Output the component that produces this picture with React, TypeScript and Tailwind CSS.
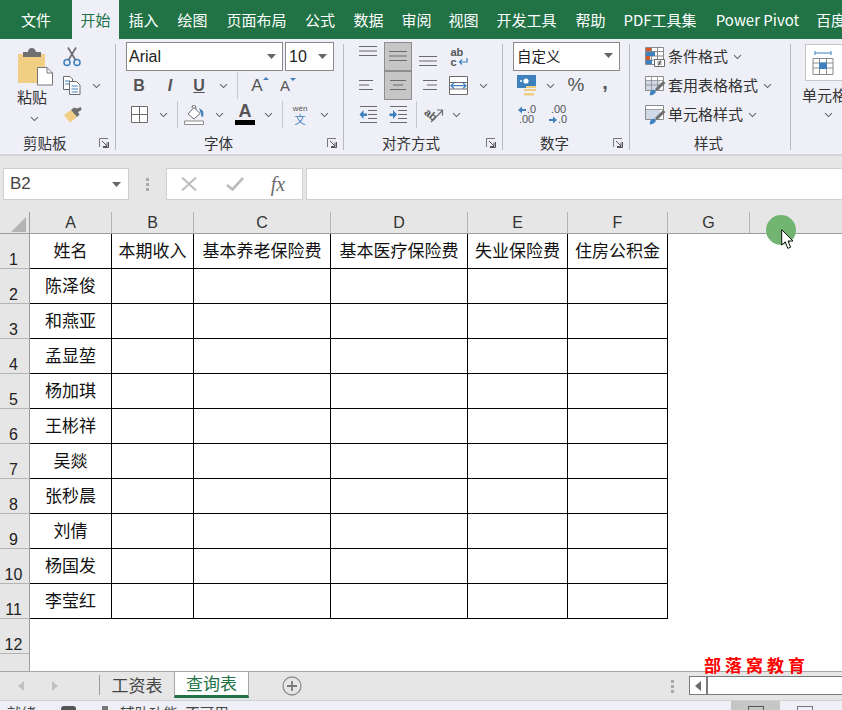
import React from "react";

const cjk = "font-['Noto_Sans_CJK_SC','Liberation_Sans',sans-serif]";
const arial = "font-['Liberation_Sans','Noto_Sans_CJK_SC',sans-serif]";

const Chev = () => (
  <svg width="9" height="6" viewBox="0 0 9 6" className="shrink-0">
    <path d="M1 1.2 L4.5 4.6 L8 1.2" fill="none" stroke="#666" strokeWidth="1.1" />
  </svg>
);
const Caret = () => (
  <svg width="9" height="5" viewBox="0 0 9 5" className="shrink-0">
    <path d="M0 0 H9 L4.5 5 Z" fill="#666" />
  </svg>
);
const Launcher = () => (
  <svg width="10" height="10" viewBox="0 0 10 10" className="shrink-0">
    <path d="M0.5 9 V0.5 H9" fill="none" stroke="#777" />
    <path d="M3 3 L8 8 M8 4.5 V8.5 H4 M4 9.5 H9.5 V4" fill="none" stroke="#555" strokeWidth="1" />
  </svg>
);
const Slot = ({ w, children }: { w: string; children?: React.ReactNode }) => (
  <div className={`${w} flex h-full items-center justify-center shrink-0`}>{children}</div>
);
const VDiv = () => <div className="h-[27px] w-px shrink-0 bg-[#c6c6c6]" />;
const Row = ({ children, className = "" }: { children?: React.ReactNode; className?: string }) => (
  <div className={`flex h-[29px] items-center ${className}`}>{children}</div>
);

const Lines = ({ rows }: { rows: [number, number][] }) => (
  <svg width="20" height="20" viewBox="0 0 20 20">
    {rows.map(([a, b], i) => (
      <path key={i} d={`M${a} ${4.5 + i * 4.5} H${b}`} stroke="#6b6b6b" strokeWidth="1" />
    ))}
  </svg>
);

const PasteIcon = () => (
  <svg width="36" height="38" viewBox="0 0 36 38">
    <path d="M0 6 H27 V35 H0 Z" fill="#f0ce83" />
    <path d="M5 4 H10 Q10 0 14 0 Q17 0 18 4 H23 V9 H5 Z" fill="#6f6f6f" />
    <path d="M19.5 19.5 H29 L34.5 25 V37 H19.5 Z" fill="#fff" stroke="#777" />
    <path d="M29 19.5 V25 H34.5" fill="none" stroke="#777" />
  </svg>
);
const Scissors = () => (
  <svg width="18" height="20" viewBox="0 0 18 20">
    <circle cx="4" cy="15.5" r="3" fill="none" stroke="#3f80bf" strokeWidth="1.5" />
    <circle cx="14" cy="15.5" r="3" fill="none" stroke="#3f80bf" strokeWidth="1.5" />
    <path d="M5.5 13 L13 0.5 M12.5 13 L5 0.5" stroke="#6b6b6b" strokeWidth="1.6" />
  </svg>
);
const CopyIcon = () => (
  <svg width="18" height="19" viewBox="0 0 18 19">
    <path d="M0.5 0.5 H7 L9.5 3 V13.5 H0.5 Z" fill="#fff" stroke="#6b6b6b" />
    <path d="M2 5 H7 M2 8 H7" stroke="#3f80bf" />
    <path d="M6.5 5.5 H13.5 L17 9 V18.5 H6.5 Z" fill="#fff" stroke="#6b6b6b" />
    <path d="M8.5 10 H15 M8.5 13 H15 M8.5 16 H15" stroke="#3f80bf" />
  </svg>
);
const Brush = () => (
  <svg width="18" height="16" viewBox="0 0 18 16">
    <path d="M0 8 L7 3 L13 10 L6 15.5 Z" fill="#f0ce83" />
    <path d="M7 3 L10 0.5 L13 1.5 L17 0 L17.5 3 L14 5 L15.5 7.5 L13 10 Z" fill="#6f6f6f" />
  </svg>
);
const BordersIcon = () => (
  <svg width="18" height="18" viewBox="0 0 18 18">
    <path d="M0.5 0.5 H16.5 V16.5 H0.5 Z M8.5 0.5 V16.5 M0.5 8.5 H16.5" fill="#fff" stroke="#6b6b6b" />
  </svg>
);
const FillIcon = () => (
  <svg width="21" height="20" viewBox="0 0 21 20">
    <path d="M4 9 L10 2.5 L16 8.5 L10 14 Z" fill="#fff" stroke="#6b6b6b" />
    <path d="M8 3 Q8 0 10 0 Q12 0 12 4" fill="none" stroke="#6b6b6b" />
    <path d="M15 3 L19 6 Q20 9 19 12 Q17 12 17 9 Z" fill="#3f80bf" />
    <path d="M0.5 16 H19.5 V19.5 H0.5 Z" fill="#fff" stroke="#8c8c8c" />
  </svg>
);
const Merge = () => (
  <svg width="20" height="20" viewBox="0 0 20 20">
    <path d="M0.5 0.5 H18.5 V18.5 H0.5 Z M0.5 6.5 H18.5 M0.5 13 H18.5" fill="#fff" stroke="#6b6b6b" />
    <path d="M2 9.7 H17 M5 7 L2 9.7 L5 12.4 M14 7 L17 9.7 L14 12.4" fill="none" stroke="#3f80bf" strokeWidth="1.3" />
  </svg>
);
const Indent = ({ flip }: { flip?: boolean }) => (
  <svg width="19" height="17" viewBox="0 0 19 17">
    <path d="M1 0.5 H18 M9 4.5 H18 M9 8.5 H18 M9 12.5 H18 M1 16.5 H18" stroke="#6b6b6b" />
    {flip ? (
      <path d="M0.5 7.5 H4 V4 L8 8.5 L4 13 V10 H0.5 Z" fill="#3f80bf" />
    ) : (
      <path d="M8 7.5 H4.5 V4 L0.5 8.5 L4.5 13 V10 H8 Z" fill="#3f80bf" />
    )}
  </svg>
);
const Orient = () => (
  <svg width="20" height="18" viewBox="0 0 20 18">
    <text x="0" y="12" fontSize="11" fontFamily="Liberation Sans" fontWeight="bold" fill="#555" transform="rotate(40 6 9)">ab</text>
    <path d="M7 16 L18 5 M13 4 H18.5 V9.5" fill="none" stroke="#6b6b6b" strokeWidth="1.2" />
  </svg>
);
const Accounting = () => (
  <svg width="20" height="21" viewBox="0 0 20 21">
    <path d="M0 0 H19 V11 H12 V13 H0 Z" fill="#3f80bf" />
    <circle cx="9" cy="6" r="2.6" fill="#fff" />
    <ellipse cx="4" cy="6" rx="1" ry="1" fill="#fff" />
    <path d="M9 11 H19 V13 H9 Z M7 14 H19 V16 H7 Z M7 18 H17 V20.5 H7 Z" fill="#f0ce83" />
  </svg>
);
const Dec = ({ dir }: { dir: "l" | "r" }) => (
  <div className={`flex flex-col ${arial} text-[11px] leading-[9px] text-[#555]`}>
    {dir === "l" ? (
      <>
        <div className="flex items-center">
          <svg width="8" height="8" viewBox="0 0 8 8"><path d="M8 3 H4 V0.5 L0 4 L4 7.5 V5 H8 Z" fill="#3f80bf" /></svg>
          <span className="ml-[1px]">.0</span>
        </div>
        <span className="ml-[1px] mt-[1px]">.00</span>
      </>
    ) : (
      <>
        <span className="ml-[2px]">.00</span>
        <div className="mt-[1px] flex items-center">
          <svg width="8" height="8" viewBox="0 0 8 8"><path d="M0 3 H4 V0.5 L8 4 L4 7.5 V5 H0 Z" fill="#3f80bf" /></svg>
          <span className="ml-[1px]">.0</span>
        </div>
      </>
    )}
  </div>
);
const CondIcon = () => (
  <svg width="20" height="20" viewBox="0 0 20 20">
    <path d="M0.5 0.5 H18.5 V17.5 H0.5 Z M6.5 0.5 V17.5 M12.5 0.5 V17.5 M0.5 4.5 H18.5 M0.5 9 H18.5 M0.5 13 H18.5" fill="#fff" stroke="#8a8a8a" />
    <path d="M1 1 H6 V4 H1 Z" fill="#d9582b" />
    <path d="M1 5 H10 V9 H1 Z" fill="#3f80bf" />
    <path d="M1 9 H5 V13 H1 Z" fill="#d9582b" />
    <path d="M1 13 H7 V17 H1 Z" fill="#3f80bf" />
    <path d="M9.5 12.5 H19.5 V19.5 H9.5 Z" fill="#fff" stroke="#6b6b6b" />
    <path d="M12.5 15 H16.5 M12.5 17 H16.5 M13.5 18.5 L15.5 13.5" stroke="#555" />
  </svg>
);
const TableIcon = ({ grid }: { grid: boolean }) => (
  <svg width="21" height="20" viewBox="0 0 21 20">
    <path d="M0.5 0.5 H18.5 V14.5 H0.5 Z" fill="#fff" stroke="#8a8a8a" />
    <path d="M1 5 H15 V14 H1 Z" fill="#cfd8e6" />
    {grid ? (
      <path d="M0.5 4.5 H18.5 M0.5 9 H18.5 M6.5 0.5 V14.5 M12.5 0.5 V14.5" fill="none" stroke="#8a8a8a" strokeWidth="0.8" />
    ) : (
      <path d="M0.5 4.5 H18.5" fill="none" stroke="#8a8a8a" strokeWidth="0.8" />
    )}
    <path d="M5 19.5 Q4 15 8.5 13.5 L11 15.5 Q10 19 5 19.5 Z" fill="#3f80bf" />
    <path d="M10 13 L18 5 L20.5 7 L12 15 Z" fill="#6f6f6f" />
  </svg>
);
const CellStyleIcon = () => (
  <svg width="34" height="28" viewBox="0 0 34 28">
    <path d="M8 2 V6 M8 4 H24 M24 2 V6" stroke="#3f80bf" fill="none" />
    <path d="M6 9.5 H26 V25.5 H6 Z M6 14 H26 M6 19 H26 M12.5 9.5 V25.5 M19.5 9.5 V25.5" fill="#fff" stroke="#8a8a8a" />
    <path d="M12 13.5 H20 V20 H12 Z" fill="#3f80bf" />
  </svg>
);

const Group = ({ w, children, label, labelPad, launcher = true }: { w: string; children: React.ReactNode; label: string; labelPad: string; launcher?: boolean }) => (
  <div className={`${w} flex h-full shrink-0 flex-col`}>
    <div className="h-[90px]">{children}</div>
    <div className={`mt-[4px] flex h-[20px] items-center ${labelPad} text-[14.5px] leading-[20px] text-[#333]`}>
      <span>{label}</span>
      {launcher && <span className="ml-auto mr-[6px] flex"><Launcher /></span>}
    </div>
  </div>
);
const Sep = () => <div className="my-[5px] h-[106px] w-px shrink-0 bg-[#b9b9b9]" />;

const tabs = [
  ["文件", "w-[72px]"],
  ["开始", "w-[47px]"],
  ["插入", "w-[49px]"],
  ["绘图", "w-[49px]"],
  ["页面布局", "w-[79px]"],
  ["公式", "w-[48px]"],
  ["数据", "w-[49px]"],
  ["审阅", "w-[47px]"],
  ["视图", "w-[47px]"],
  ["开发工具", "w-[79px]"],
  ["帮助", "w-[49px]"],
  ["PDF工具集", "w-[90px]"],
  ["Power Pivot", "w-[105px]"],
  ["百度", "w-[50px] pl-[6px] justify-start"],
];

const cols = ["A", "B", "C", "D", "E", "F"];
const names = ["姓名", "陈泽俊", "和燕亚", "孟显堃", "杨加琪", "王彬祥", "吴燚", "张秒晨", "刘倩", "杨国发", "李莹红"];
const heads = ["本期收入", "基本养老保险费", "基本医疗保险费", "失业保险费", "住房公积金"];

export default function App() {
  return (
    <div className={`relative flex h-[710px] w-[842px] flex-col overflow-hidden bg-white ${cjk}`}>
      {/* Tabs */}
      <div className="flex h-[39px] shrink-0 overflow-hidden bg-[#217346]">
        {tabs.map(([t, w], i) => (
          <div key={t} className={`${w} flex shrink-0 items-center ${w.includes("justify-start") ? "" : "justify-center"} whitespace-nowrap text-[15px] leading-[38px] ${i === 1 ? "bg-[#eeeff7] text-[#217346]" : "text-white"}`}>
            {t}
          </div>
        ))}
      </div>

      {/* Ribbon */}
      <div className="flex h-[117px] shrink-0 overflow-hidden border-b-2 border-[#d4d4d4] bg-[#eeeff7] pb-0">
        <Group w="w-[115px]" label="剪贴板" labelPad="pl-[23px]">
          <div className="flex h-full">
            <div className="flex w-[61px] flex-col pl-[18px] pt-[9px]">
              <PasteIcon />
              <div className="-ml-[1px] text-[15px] leading-[22px] text-[#333]">粘贴</div>
              <div className="ml-[12px] mt-[8px] flex"><Chev /></div>
            </div>
            <div className="flex flex-col pt-[3px]">
              <Row className="pl-[2px]"><Scissors /></Row>
              <Row className="pl-[2px]"><CopyIcon /><span className="ml-[11px] flex"><Chev /></span></Row>
              <Row className="pl-[3px]"><Brush /></Row>
            </div>
          </div>
        </Group>
        <Sep />
        <Group w="w-[227px]" label="字体" labelPad="pl-[88px]">
          <div className="pl-[10px] pt-[3px]">
            <Row className="gap-[2px]">
              <div className={`flex h-[29px] w-[157px] items-center justify-between border border-[#8a8a8a] bg-white pl-[2px] pr-[6px] ${arial} text-[16px] text-[#222]`}>Arial<Caret /></div>
              <div className={`flex h-[29px] w-[49px] items-center justify-between border border-[#8a8a8a] bg-white pl-[3px] pr-[6px] ${arial} text-[16px] text-[#222]`}>10<Caret /></div>
            </Row>
            <Row className={`${arial} text-[#555]`}>
              <Slot w="w-[26px]"><span className="text-[16px] font-bold">B</span></Slot>
              <Slot w="w-[36px]"><span className="text-[16px] font-bold italic">I</span></Slot>
              <Slot w="w-[22px]"><span className="text-[16px] font-bold underline">U</span></Slot>
              <Slot w="w-[26px]"><Chev /></Slot>
              <div className="ml-[1px]"><VDiv /></div>
              <Slot w="w-[38px]">
                <span className="relative text-[17px] leading-[18px]">A<span className="absolute -right-[6px] top-[0px] h-0 w-0 border-x-[3px] border-b-[3px] border-x-transparent border-b-[#3f80bf]" /></span>
              </Slot>
              <Slot w="w-[18px]">
                <span className="relative text-[15px] leading-[18px]">A<span className="absolute -right-[6px] top-[1px] h-0 w-0 border-x-[3px] border-t-[3px] border-x-transparent border-t-[#3f80bf]" /></span>
              </Slot>
            </Row>
            <Row>
              <Slot w="w-[27px]"><BordersIcon /></Slot>
              <Slot w="w-[20px]"><Chev /></Slot>
              <div className="ml-[4px]"><VDiv /></div>
              <Slot w="w-[32px]"><FillIcon /></Slot>
              <Slot w="w-[18px]"><Chev /></Slot>
              <Slot w="w-[34px]">
                <div className={`flex flex-col items-center ${arial}`}>
                  <span className="text-[18px] font-bold leading-[15px] text-[#555]">A</span>
                  <span className="mt-[1px] h-[5px] w-[20px] bg-black" />
                </div>
              </Slot>
              <Slot w="w-[12px]"><Chev /></Slot>
              <div className="ml-[8px]"><VDiv /></div>
              <Slot w="w-[34px]">
                <div className="flex flex-col items-center">
                  <span className={`${arial} text-[8px] leading-[9px] text-[#555]`}>wén</span>
                  <span className="text-[11px] leading-[12px] text-[#3f80bf]">文</span>
                </div>
              </Slot>
              <Slot w="w-[14px]"><Chev /></Slot>
            </Row>
          </div>
        </Group>
        <Sep />
        <Group w="w-[158px]" label="对齐方式" labelPad="pl-[38px]">
          <div className="pl-[8px] pt-[3px]">
            <Row>
              <Slot w="w-[32px]"><div className="-mt-[10px]"><Lines rows={[[1, 19], [1, 19], [1, 19]]} /></div></Slot>
              <Slot w="w-[28px]"><div className="flex h-full w-full items-center justify-center border border-[#8e8e8e] bg-[#c6c6c6]"><Lines rows={[[1, 19], [1, 19], [1, 19]]} /></div></Slot>
              <Slot w="w-[32px]"><div className="mt-[10px]"><Lines rows={[[1, 19], [1, 19], [1, 19]]} /></div></Slot>
              <Slot w="w-[30px]">
                <div className={`flex flex-col ${arial} text-[11px] font-bold leading-[10px] text-[#555]`}>
                  <span>ab</span>
                  <span className="flex items-center">c<svg width="10" height="8" viewBox="0 0 10 8" className="ml-[1px]"><path d="M9 0 V4 H2 M4 1.5 L1.5 4 L4 6.5" fill="none" stroke="#3f80bf" strokeWidth="1.2" /></svg></span>
                </div>
              </Slot>
            </Row>
            <Row>
              <Slot w="w-[32px]"><Lines rows={[[1, 15], [1, 11], [1, 15]]} /></Slot>
              <Slot w="w-[28px]"><div className="flex h-full w-full items-center justify-center border border-[#8e8e8e] bg-[#c6c6c6]"><Lines rows={[[2, 18], [5, 15], [2, 18]]} /></div></Slot>
              <Slot w="w-[32px]"><Lines rows={[[5, 19], [9, 19], [5, 19]]} /></Slot>
              <Slot w="w-[30px]"><Merge /></Slot>
              <Slot w="w-[18px]"><Chev /></Slot>
            </Row>
            <Row>
              <Slot w="w-[32px]"><Indent /></Slot>
              <Slot w="w-[28px]"><Indent flip /></Slot>
              <div className="ml-[4px]"><VDiv /></div>
              <Slot w="w-[34px]"><Orient /></Slot>
              <Slot w="w-[10px]"><Chev /></Slot>
            </Row>
          </div>
        </Group>
        <Sep />
        <Group w="w-[126px]" label="数字" labelPad="pl-[37px]">
          <div className="pl-[10px] pt-[3px]">
            <Row>
              <div className="flex h-[29px] w-[107px] items-center justify-between border border-[#8a8a8a] bg-white pb-[2px] pl-[3px] pr-[6px] text-[14.5px] text-[#222]">自定义<Caret /></div>
            </Row>
            <Row>
              <Slot w="w-[28px]"><Accounting /></Slot>
              <Slot w="w-[18px]"><Chev /></Slot>
              <Slot w="w-[34px]"><span className={`${arial} text-[19px] text-[#555]`}>%</span></Slot>
              <Slot w="w-[24px]"><span className={`${arial} -mt-[8px] text-[20px] font-bold text-[#555]`}>,</span></Slot>
            </Row>
            <Row>
              <Slot w="w-[28px]"><Dec dir="l" /></Slot>
              <Slot w="w-[34px]"><Dec dir="r" /></Slot>
            </Row>
          </div>
        </Group>
        <Sep />
        <Group w="w-[160px]" label="样式" labelPad="pl-[64px]" launcher={false}>
          <div className="pl-[15px] pt-[3px] text-[15px] leading-[20px] text-[#333]">
            <Row><CondIcon /><span className="-mt-[2px] ml-[3px]">条件格式</span><span className="ml-[5px] flex"><Chev /></span></Row>
            <Row><TableIcon grid /><span className="-mt-[2px] ml-[2px]">套用表格格式</span><span className="ml-[5px] flex"><Chev /></span></Row>
            <Row><TableIcon grid={false} /><span className="-mt-[2px] ml-[2px]">单元格样式</span><span className="ml-[5px] flex"><Chev /></span></Row>
          </div>
        </Group>
        <Sep />
        <div className="flex min-w-0 flex-1 flex-col pl-[14px] pt-[5px]">
          <div className="flex h-[37px] w-[60px] shrink-0 items-center border border-[#c6c6c6] bg-white pl-[1px]"><CellStyleIcon /></div>
          <div className="-ml-[3px] mt-[3px] whitespace-nowrap text-[15px] leading-[22px] text-[#333]">单元格样式</div>
          <div className="ml-[19px] mt-[6px] flex"><Chev /></div>
        </div>
      </div>

      {/* Formula bar */}
      <div className="flex h-[56px] shrink-0 bg-[#e6e6e6] pt-[12px]">
        <div className={`ml-[3px] flex h-[32px] w-[126px] items-center justify-between border border-[#cfcfcf] bg-white pl-[6px] pr-[7px] ${arial} text-[17px] text-[#444]`}>B2<Caret /></div>
        <div className="flex h-[32px] w-[37px] items-center justify-center">
          <div className="flex flex-col gap-[2px]">
            <span className="h-[3px] w-[3px] bg-[#a8a8a8]" />
            <span className="h-[3px] w-[3px] bg-[#a8a8a8]" />
            <span className="h-[3px] w-[3px] bg-[#a8a8a8]" />
          </div>
        </div>
        <div className="flex h-[32px] w-[137px] items-center border border-[#cfcfcf] bg-white">
          <Slot w="w-[44px]">
            <svg width="16" height="14" viewBox="0 0 16 14"><path d="M1 0.5 L15 13.5 M15 0.5 L1 13.5" stroke="#bdbdbd" strokeWidth="2" /></svg>
          </Slot>
          <Slot w="w-[47px]">
            <svg width="18" height="14" viewBox="0 0 18 14"><path d="M1 8 L6.5 12.5 L17 1" fill="none" stroke="#bdbdbd" strokeWidth="2.6" /></svg>
          </Slot>
          <Slot w="w-[40px]"><span className="font-['Liberation_Serif',serif] text-[20px] italic leading-[20px] text-[#6b6b6b]">fx</span></Slot>
        </div>
        <div className="ml-[3px] h-[32px] flex-1 border-y border-l border-[#cfcfcf] bg-white" />
      </div>

      {/* Grid */}
      <div className="grid min-h-0 flex-1 grid-cols-[30px_82px_82px_137px_137px_100px_100px_82px_1fr] grid-rows-[22px_repeat(12,35px)_1fr] overflow-hidden">
        <div className="relative border-b border-r border-[#9c9c9c] bg-[#e6e6e6]">
          <svg width="15" height="15" viewBox="0 0 15 15" className="absolute bottom-[1px] right-[3px]"><path d="M15 0 V15 H0 Z" fill="#b4b4b4" /></svg>
        </div>
        {[...cols, "G"].map((c) => (
          <div key={c} className={`flex items-center justify-center border-b border-r border-b-[#9c9c9c] border-r-[#b4b4b4] bg-[#e6e6e6] pt-[1px] ${arial} text-[16px] leading-[18px] text-[#333]`}>{c}</div>
        ))}
        <div className="border-b border-[#9c9c9c] bg-[#e6e6e6]" />
        {names.map((n, r) => (
          <React.Fragment key={n}>
            <div className={`flex items-end justify-center border-b border-r border-b-[#b4b4b4] border-r-[#9c9c9c] bg-[#e6e6e6] pr-[2px] ${arial} text-[16px] leading-[16px] text-[#222]`}>{r + 1}</div>
            <div className="flex items-center justify-center border-b border-r border-black pb-[2px] text-[17px] leading-[22px] text-[#111]">{n}</div>
            {heads.map((h) => (
              <div key={h} className="flex items-center justify-center whitespace-nowrap border-b border-r border-black pb-[2px] text-[17px] leading-[22px] text-[#111]">{r === 0 ? h : ""}</div>
            ))}
            <div />
            <div />
          </React.Fragment>
        ))}
        <div className={`flex items-center justify-center border-b border-r border-b-[#b4b4b4] border-r-[#9c9c9c] bg-[#e6e6e6] pr-[2px] pt-[17px] ${arial} text-[16px] leading-[16px] text-[#222]`}>12</div>
        <div className="col-span-8" />
        <div className="border-r border-[#9c9c9c] bg-[#e6e6e6]" />
        <div className="col-span-8" />
      </div>

      {/* Sheet tabs */}
      <div className="flex h-[29px] shrink-0 items-stretch border-t border-[#a6a6a6] bg-[#e6e6e6]">
        <div className="flex w-[99px] items-center">
          <Slot w="w-[41px]"><svg width="6" height="10" viewBox="0 0 6 10"><path d="M6 0 V10 L0 5 Z" fill="#c0c0c0" /></svg></Slot>
          <Slot w="w-[28px]"><svg width="6" height="10" viewBox="0 0 6 10"><path d="M0 0 V10 L6 5 Z" fill="#c0c0c0" /></svg></Slot>
        </div>
        <div className="mb-[5px] mt-[3px] w-px bg-[#9c9c9c]" />
        <div className="flex w-[74px] items-center justify-center pb-[3px] text-[17px] leading-[22px] text-[#444]">工资表</div>
        <div className="flex h-[26px] w-[75px] items-center justify-center border-x border-b-[3px] border-x-[#a6a6a6] border-b-[#217346] bg-white pb-[1px] text-[17px] leading-[22px] text-[#217346]">查询表</div>
        <div className="ml-[33px] flex items-center pb-[1px]">
          <svg width="20" height="20" viewBox="0 0 20 20"><circle cx="10" cy="10" r="9" fill="none" stroke="#8c8c8c" strokeWidth="1.3" /><path d="M10 5 V15 M5 10 H15" stroke="#7a7a7a" strokeWidth="1.8" /></svg>
        </div>
        <div className="ml-[369px] flex w-[4px] flex-col justify-center gap-[2px]">
          <span className="h-[3px] w-[3px] bg-[#a8a8a8]" />
          <span className="h-[3px] w-[3px] bg-[#a8a8a8]" />
          <span className="h-[3px] w-[3px] bg-[#a8a8a8]" />
        </div>
        <div className="ml-[14px] mt-[4px] flex h-[19px] flex-1 border-y border-l border-[#7a7a7a] bg-white">
          <div className="flex w-[18px] items-center justify-center border-r-2 border-[#7a7a7a]">
            <svg width="6" height="10" viewBox="0 0 6 10"><path d="M6 0 V10 L0 5 Z" fill="#6b6b6b" /></svg>
          </div>
        </div>
      </div>

      {/* Status bar */}
      <div className="flex h-[10px] shrink-0 overflow-hidden border-t border-[#d0d0d0] bg-[#eeeff7] text-[14.5px] leading-[20px] text-[#444]">
        <div className="w-[61px] pl-[7px] pt-[2px]">就绪</div>
        <div className="mt-[5px] h-[10px] w-[15px] rounded-t-[3px] bg-[#555]" />
        <div className="ml-[26px] mt-[5px] h-[10px] w-[6px] bg-[#777]" />
        <div className="ml-[12px] w-[120px] whitespace-nowrap pt-[2px]">辅助功能: 不可用</div>
        <div className="ml-[491px] flex w-[49px] justify-center bg-[#c6c6c6] pt-[5px]">
          <div className="h-[10px] w-[16px] border border-[#555]" />
        </div>
        <div className="ml-[17px] mt-[5px] h-[10px] w-[16px] border border-[#777]" />
      </div>

      {/* Overlays */}
      <div className="absolute left-[704px] top-[654px] whitespace-nowrap font-['Noto_Sans_CJK_SC',serif] text-[17px] font-bold leading-[22px] tracking-[4px] text-[#f00]">部落窝教育</div>
      <div className="absolute left-[766px] top-[215px] h-[30px] w-[30px] rounded-full bg-[#72b472]" />
      <svg width="14" height="21" viewBox="0 0 14 21" className="absolute left-[781px] top-[229px]">
        <path d="M0.7 0.7 V16 L4.2 12.8 L6.8 19.4 L9.6 18.2 L7 12 H12 Z" fill="#fff" stroke="#111" strokeWidth="1" />
      </svg>
    </div>
  );
}
